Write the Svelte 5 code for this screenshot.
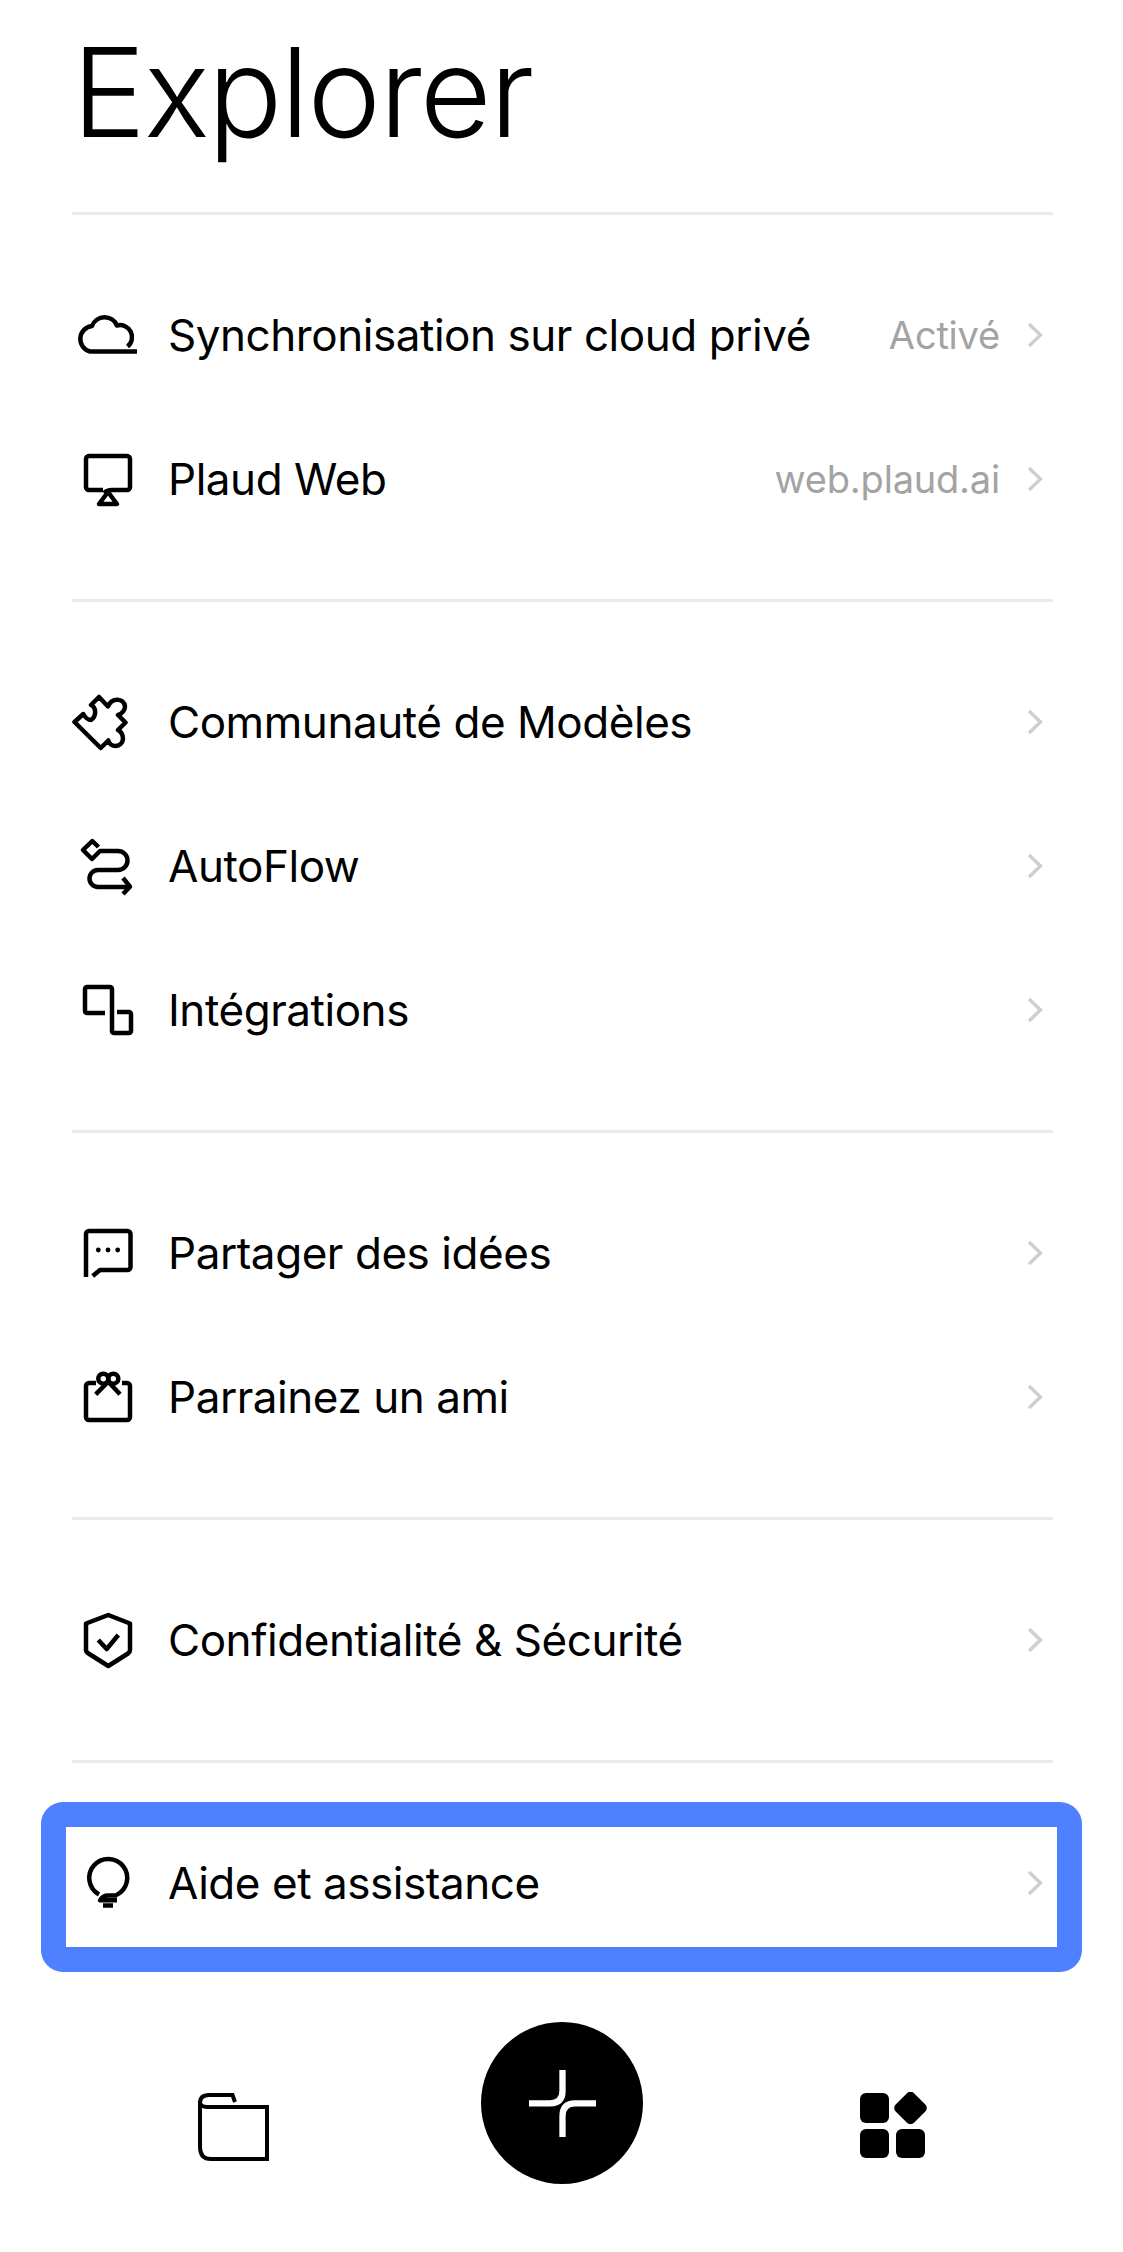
<script>
	const groups = [
		[
			{ icon: 'cloud', label: 'Synchronisation sur cloud privé', value: 'Activé' },
			{ icon: 'monitor', label: 'Plaud Web', value: 'web.plaud.ai' }
		],
		[
			{ icon: 'puzzle', label: 'Communauté de Modèles' },
			{ icon: 'flow', label: 'AutoFlow' },
			{ icon: 'apps', label: 'Intégrations' }
		],
		[
			{ icon: 'chat', label: 'Partager des idées' },
			{ icon: 'gift', label: 'Parrainez un ami' }
		],
		[{ icon: 'shield', label: 'Confidentialité & Sécurité' }]
	];
</script>

{#snippet icon(name)}
	<svg class="icon" viewBox="0 0 68 68" fill="none" stroke="#000" stroke-width="4.500" stroke-linejoin="round" aria-hidden="true">
		{#if name === 'cloud'}
			<path d="M65 50.500H18A13 13 0 0 1 20 25A13.500 13.500 0 0 1 45 24.500A12 12 0 0 1 55.500 45.500" />
		{:else if name === 'monitor'}
			<path d="M31 45H17a3 3 0 0 1-3-3V14a3 3 0 0 1 3-3H55a3 3 0 0 1 3 3V42a3 3 0 0 1-3 3H40c-3 0-6 1-8 3" />
			<path d="M36 47L45 59H27Z" />
		{:else if name === 'puzzle'}
			<path d="M2.500 34L28.700 60L36.300 52.500C38 60 50 60 51 51C51 46 48 43 46 42L53.500 34.500L46 27C50 26 53 22 53 18.500C52 10 40 9 36 18.500L27 9L19 17C24 19 25 28 19 32C16 32 13 29 11.300 26Z" />
		{:else if name === 'flow'}
			<path d="M26.500 15L20.300 9L11 18L20 27L28 19H46a9.500 9.500 0 0 1 0 19H26a8.500 8.500 0 0 0 0 17H57" />
			<path d="M51 46L58 54.700L51 62" />
		{:else if name === 'apps'}
			<path d="M33 37H15a2 2 0 0 1-2-2V13a2 2 0 0 1 2-2H38a2 2 0 0 1 2 2V55a2 2 0 0 0 2 2H57a2 2 0 0 0 2-2V38a2 2 0 0 0-2-2H45" />
		{:else if name === 'chat'}
			<path d="M14 58V15a3 3 0 0 1 3-3H55.500a3 3 0 0 1 3 3V48a3 3 0 0 1-3 3H28L20.700 57" />
			<circle cx="26.300" cy="31" r="2.400" fill="#000" stroke="none" />
			<circle cx="36" cy="31" r="2.400" fill="#000" stroke="none" />
			<circle cx="45.700" cy="31" r="2.400" fill="#000" stroke="none" />
		{:else if name === 'gift'}
			<path d="M24 20H17a3 3 0 0 0-3 3V54a3 3 0 0 0 3 3H55a3 3 0 0 0 3-3V23a3 3 0 0 0-3-3H50" />
			<circle cx="31.300" cy="15.700" r="5" />
			<circle cx="41.300" cy="15.700" r="5" />
			<path d="M23.700 31.300L35 20M48 31.300L37.500 20" />
		{:else if name === 'shield'}
			<path d="M36.300 9L58 17.500V44Q58 46 56 47.500L36.300 60L16.500 47.500Q14 46 14 44V17.500Z" />
			<path d="M26.300 34L34.700 43L46.300 29" />
		{:else if name === 'bulb'}
			<path d="M44.500 46A19 19 0 1 0 27 45.500" />
			<path d="M45 46.500H36C32 46.500 30 48 28 51.300H45" />
			<path d="M31 56.500H41" />
		{/if}
	</svg>
{/snippet}

{#snippet row(item)}
	<div class="row">
		{@render icon(item.icon)}
		<span class="label">{item.label}</span>
		{#if item.value}
			<span class="value">{item.value}</span>
		{/if}
		<svg class="chev" viewBox="0 0 16 26" fill="none" stroke="#cfcfcf" stroke-width="3.500" aria-hidden="true">
			<path d="M2 2L13.500 13L2 24" />
		</svg>
	</div>
{/snippet}

<main class="page">
	<h1>Explorer</h1>

	{#each groups as group}
		<section class="group">
			{#each group as item}
				{@render row(item)}
			{/each}
		</section>
	{/each}

	<section class="group">
		<div class="focus">
			{@render row({ icon: 'bulb', label: 'Aide et assistance' })}
			<div class="ring"></div>
		</div>
	</section>

	<nav class="tabs">
		<svg class="tab-folder" viewBox="0 0 72 68" fill="none" stroke="#000" stroke-width="4" aria-hidden="true">
			<path d="M38 9L35.500 2H12C5 2 3 6 3 10V54C3 62 7 66 14 66H70V14H10C6 14 3 12 3 9" />
		</svg>
		<button class="fab" aria-label="Nouveau">
			<svg viewBox="0 0 68 68" fill="none" stroke="#fff" stroke-width="6.300" aria-hidden="true">
				<path d="M34.500 1V22Q34.500 34.300 22 34.300H1" />
				<path d="M68 34.300H47Q34.500 34.300 34.500 47V68" />
			</svg>
		</button>
		<svg class="tab-apps" viewBox="0 0 68 68" fill="#000" aria-hidden="true">
			<rect x="0" y="1" width="29" height="30" rx="6" />
			<rect x="0" y="37" width="29" height="29" rx="6" />
			<rect x="36" y="37" width="29" height="29" rx="6" />
			<rect x="37.500" y="3" width="26" height="26" rx="5" transform="rotate(45 50.500 16)" />
		</svg>
	</nav>
</main>

<style>
	:global(body) {
		background: #fff;
	}

	.page {
		box-sizing: border-box;
		width: 1123px;
		height: 2252px;
		padding: 0 70px 0 72px;
		font-family: Inter, 'Liberation Sans', sans-serif;
		color: #000;
		overflow: hidden;
	}

	h1 {
		margin: 0;
		height: 212px;
		font-size: 124px;
		font-weight: 300;
		line-height: 184px;
		letter-spacing: -1.9px;
	}

	.group {
		border-top: 3px solid #eaeaea;
		padding: 48px 0;
	}

	.row {
		display: flex;
		align-items: center;
		height: 144px;
		padding-right: 10px;
	}

	.icon {
		width: 68px;
		height: 68px;
		flex: none;
		margin-right: 28px;
	}

	.label {
		flex: 1;
		font-size: 44px;
		font-weight: 400;
		letter-spacing: -0.45px;
		white-space: nowrap;
	}

	.value {
		font-size: 38px;
		letter-spacing: -0.2px;
		color: #a3a3a3;
		margin-right: 27px;
	}

	.chev {
		width: 16px;
		height: 26px;
		flex: none;
	}

	.focus {
		position: relative;
	}

	.ring {
		position: absolute;
		left: -31px;
		right: -29px;
		top: -9px;
		box-sizing: border-box;
		height: 170px;
		border: 25px solid #4f80ff;
		border-radius: 22px;
		pointer-events: none;
	}

	.tabs {
		display: flex;
		align-items: center;
		margin-top: 19px;
		padding-left: 125px;
	}

	.tab-folder {
		width: 72px;
		height: 68px;
		margin-top: 48px;
	}

	.tab-apps {
		width: 68px;
		height: 68px;
		margin-top: 46px;
	}

	.fab {
		display: grid;
		place-items: center;
		width: 162px;
		height: 162px;
		margin: 0 217px 0 212px;
		padding: 0;
		border: 0;
		border-radius: 50%;
		background: #000;
	}

	.fab svg {
		width: 68px;
		height: 68px;
	}
</style>
